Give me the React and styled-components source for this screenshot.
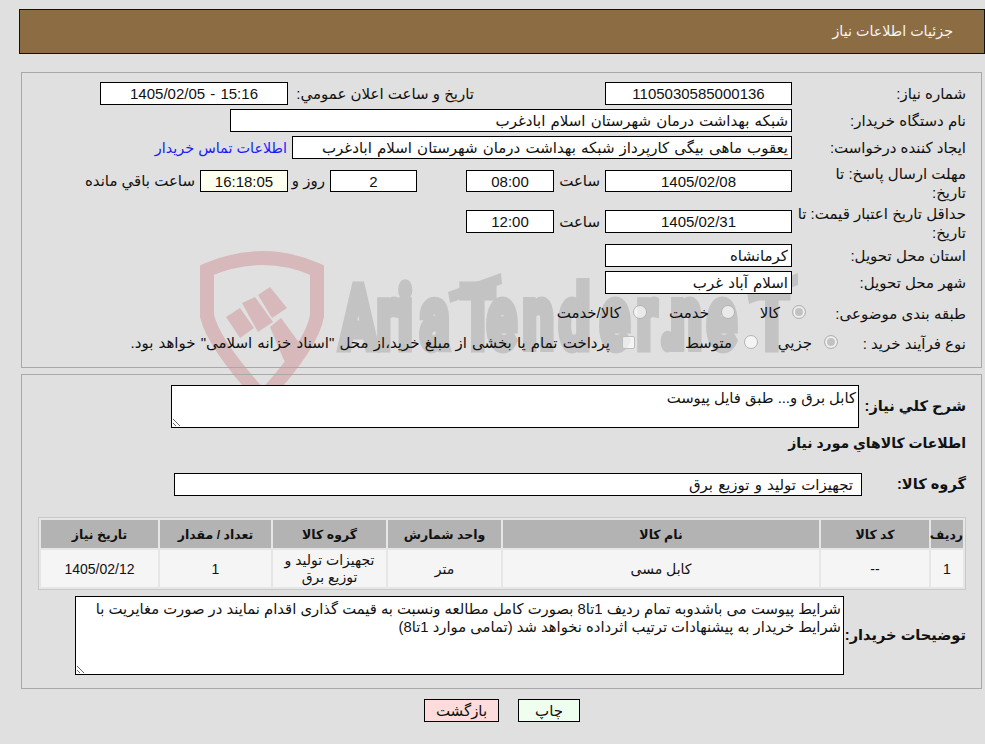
import React from "react";
import styled, { createGlobalStyle } from "styled-components";

const GlobalStyle = createGlobalStyle`
  html, body {
    margin: 0;
    background: #e0e0e0;
  }
  body {
    font-family: "Liberation Sans", "DejaVu Sans", sans-serif;
    font-size: 15px;
    color: #111;
  }
`;

const Page = styled.div`
  position: relative;
  width: 985px;
  height: 744px;
  overflow: hidden;
  box-sizing: border-box;
  padding: 9px 0 0 19px;
`;

const Watermark = styled.svg`
  position: absolute;
  left: 190px;
  top: 240px;
  z-index: 0;
`;

const Content = styled.div`
  position: relative;
  z-index: 1;
`;

const Header = styled.div`
  box-sizing: border-box;
  width: 966px;
  height: 45px;
  background: #8c6d43;
  border: 1px solid #111;
  color: #f4f4f4;
  font-size: 14.3px;
  padding: 0 31px;
  line-height: 43px;
`;

const Panel = styled.div`
  box-sizing: border-box;
  margin: ${(p) => p.$top}px 3px 0 0;
  width: 961px;
  height: ${(p) => p.$h}px;
  border: 1px solid #a8a8a8;
  padding: ${(p) => p.$pad}px 15px 0 0;
`;

const Row = styled.div`
  display: flex;
  align-items: center;
  height: ${(p) => p.$h || 23}px;
  margin-bottom: ${(p) => (p.$mb === undefined ? 4 : p.$mb)}px;
`;

const Label = styled.div`
  flex: none;
  box-sizing: border-box;
  width: ${(p) => p.$w || 174}px;
  padding-top: ${(p) => p.$pt || 0}px;
  line-height: 19px;
  white-space: nowrap;
  font-weight: ${(p) => (p.$bold ? "bold" : "normal")};
  font-size: ${(p) => (p.$bold ? 14.6 : 15)}px;
`;

const Side = styled.div`
  flex: none;
  box-sizing: border-box;
  width: ${(p) => p.$w}px;
  padding-right: ${(p) => p.$pr || 0}px;
  white-space: nowrap;
`;

const Field = styled.input`
  flex: none;
  box-sizing: border-box;
  width: ${(p) => p.$w}px;
  height: ${(p) => p.$h || 23}px;
  border: 1px solid #000;
  border-radius: 0;
  margin: 0;
  padding: 0 ${(p) => p.$px || 3}px;
  outline: none;
  background: ${(p) => p.$bg || "#fff"};
  color: #111;
  font: inherit;
  word-spacing: 1px;
  text-align: ${(p) => (p.$center ? "center" : "right")};
`;

const Notes = styled.textarea`
  flex: none;
  display: block;
  box-sizing: border-box;
  width: ${(p) => p.$w}px;
  height: ${(p) => p.$h}px;
  border: 1px solid #000;
  border-radius: 0;
  margin: 0;
  padding: 3px 2px 2px;
  outline: none;
  background: #fff;
  color: #111;
  font: inherit;
  font-size: 14.8px;
  line-height: 18px;
  overflow: hidden;
  resize: both;
`;

const LinkText = styled.a`
  color: #1a1aff;
  font-size: 14.4px;
  padding-right: 5px;
  text-decoration: none;
  white-space: nowrap;
`;

const Option = styled.label`
  flex: none;
  display: flex;
  align-items: center;
  box-sizing: border-box;
  width: ${(p) => p.$w}px;
  word-spacing: ${(p) => p.$ws || 0}px;
  white-space: nowrap;
`;

const Radio = styled.input.attrs({ type: "radio", disabled: true })`
  flex: none;
  appearance: none;
  box-sizing: border-box;
  width: 14px;
  height: 14px;
  margin: -2px 0 0 12px;
  border-radius: 50%;
  border: 1px solid #b4b4b4;
  background: rgba(255, 255, 255, 0.65);
  &:checked {
    background: #c2c2c2;
    box-shadow: inset 0 0 0 2px #efefef;
  }
`;

const Check = styled.input.attrs({ type: "checkbox", disabled: true })`
  flex: none;
  appearance: none;
  box-sizing: border-box;
  width: 13px;
  height: 13px;
  margin: -2px 0 0 12px;
  border-radius: 2px;
  border: 1px solid #bcbcbc;
  background: rgba(255, 255, 255, 0.65);
`;

const Heading = styled.div`
  font-size: 14px;
  font-weight: bold;
  line-height: 20px;
  margin: 5px 0 20px;
`;

const Table = styled.table`
  box-sizing: border-box;
  width: 928px;
  margin-bottom: 6px;
  table-layout: fixed;
  border-collapse: separate;
  border-spacing: 2px;
  border: 1px solid #c9c9c9;
  background: #e6e6e6;
  font-size: 14px;
`;

const Th = styled.th`
  height: 28px;
  padding: 0;
  background: #b3b3b3;
  font-size: 12.5px;
  font-weight: bold;
  text-align: center;
`;

const Td = styled.td`
  height: 36px;
  padding: 1px 2px 0;
  background: #f5f5f5;
  line-height: 17px;
  text-align: center;
`;

const Actions = styled.div`
  display: flex;
  gap: 19px;
  padding: 10px 405px 0 0;
`;

const ActionButton = styled.button`
  box-sizing: border-box;
  width: ${(p) => p.$w}px;
  height: 23px;
  padding: 0;
  border: 1px solid #000;
  border-radius: 0;
  background: ${(p) => p.$bg};
  color: #111;
  font: inherit;
`;

const columns = [
  { title: "ردیف", w: 32, value: "1" },
  { title: "کد کالا", w: 108, value: "--" },
  { title: "نام کالا", w: 316, value: "کابل مسی" },
  { title: "واحد شمارش", w: 113, value: "متر" },
  { title: "گروه کالا", w: 113, value: "تجهیزات تولید و توزیع برق" },
  { title: "تعداد / مقدار", w: 111, value: "1" },
  { title: "تاریخ نیاز", w: 117, value: "1405/02/12" },
];

// left edge of each letter of the wordmark on the page
const logoScale = 0.62;
const logoLetterX = [340, 377, 398, 420, 461, 487, 523, 559, 600, 637, 660, 671, 707, 755]
  .map((x) => (x / logoScale).toFixed(1))
  .join(" ");

const Logo = () => (
  <Watermark width="620" height="170" viewBox="190 240 620 170">
    <path
      d="M207 270 Q263 246 317 270 V316 Q312 345 263 398 Q214 345 207 316 Z"
      fill="none"
      stroke="#d7b9bb"
      strokeWidth="14"
    />
    <polygon points="226,317 240,308 254,328 240,338" fill="#d7b9bb" />
    <polygon points="242,303 255,297 273,322 258,332" fill="#d7b9bb" />
    <polygon points="258,295 270,287 287,308 272,318" fill="#d7b9bb" />
    <polygon points="270,327 281,318 306,352 292,375 283,358" fill="#d7b9bb" />
    <text
      x={logoLetterX}
      y="348"
      transform={`scale(${logoScale} 1)`}
      direction="ltr"
      fontFamily="Roboto, sans-serif"
      fontWeight="700"
      fontSize="88"
      fill="#c3c3c3"
      stroke="#c3c3c3"
      strokeWidth="9"
    >
      AriaTender.neT
    </text>
    <polygon points="448,292 501,273 502,284 450,303" fill="#c3c3c3" />
    <polygon points="747,293 798,273 798,285 749,304" fill="#c3c3c3" />
  </Watermark>
);

export default function App() {
  return (
    <Page dir="rtl">
      <GlobalStyle />
      <Logo />
      <Content>
        <Header>جزئیات اطلاعات نیاز</Header>

        <Panel $top={18} $h={296} $pad={9}>
          <Row>
            <Label>شماره نیاز:</Label>
            <Field $w={187} $center readOnly value="1105030585000136" />
            <Side $w={317} $pr={131}>تاریخ و ساعت اعلان عمومي:</Side>
            <Field $w={188} $center readOnly value="15:16 - 1405/02/05" />
          </Row>
          <Row>
            <Label>نام دستگاه خریدار:</Label>
            <Field $w={562} readOnly value="شبکه بهداشت درمان شهرستان اسلام ابادغرب" />
          </Row>
          <Row>
            <Label>ایجاد کننده درخواست:</Label>
            <Field $w={500} readOnly value="یعقوب ماهی بیگی کارپرداز شبکه بهداشت درمان شهرستان اسلام ابادغرب" />
            <LinkText href="#">اطلاعات تماس خریدار</LinkText>
          </Row>
          <Row $h={36}>
            <Label $pt={3}>مهلت ارسال پاسخ: تا<br />تاریخ:</Label>
            <Field $w={187} $h={22} $center readOnly value="1405/02/08" />
            <Side $w={51} $pr={5}>ساعت</Side>
            <Field $w={88} $h={22} $center readOnly value="08:00" />
            <Side $w={49} />
            <Field $w={87} $h={22} $center readOnly value="2" />
            <Side $w={42} $pr={5}>روز و</Side>
            <Field $w={88} $h={22} $center $bg="#ffffee" readOnly value="16:18:05" />
            <Side $w={120} $pr={5}>ساعت باقي مانده</Side>
          </Row>
          <Row $h={37}>
            <Label $pt={3}>حداقل تاریخ اعتبار قیمت: تا<br />تاریخ:</Label>
            <Field $w={187} $center readOnly value="1405/02/31" />
            <Side $w={51} $pr={5}>ساعت</Side>
            <Field $w={88} $center readOnly value="12:00" />
          </Row>
          <Row>
            <Label>استان محل تحویل:</Label>
            <Field $w={187} readOnly value="کرمانشاه" />
          </Row>
          <Row $mb={7}>
            <Label>شهر محل تحویل:</Label>
            <Field $w={187} readOnly value="اسلام آباد غرب" />
          </Row>
          <Row $h={24} $mb={6}>
            <Label $w={160}>طبقه بندی موضوعی:</Label>
            <Option $w={71}><Radio defaultChecked name="kind" />کالا</Option>
            <Option $w={88}><Radio name="kind" />خدمت</Option>
            <Option $w={120}><Radio name="kind" />کالا/خدمت</Option>
          </Row>
          <Row $h={24}>
            <Label $w={128}>نوع فرآیند خرید :</Label>
            <Option $w={80}><Radio defaultChecked name="process" />جزيي</Option>
            <Option $w={123}><Radio name="process" />متوسط</Option>
            <Option $w={520} $ws={1}><Check />پرداخت تمام یا بخشی از مبلغ خرید،از محل "اسناد خزانه اسلامی" خواهد بود.</Option>
          </Row>
        </Panel>

        <Panel $top={6} $h={315} $pad={10}>
          <Row $h={43} $mb={0}>
            <Label $w={107} $bold>شرح کلي نیاز:</Label>
            <Notes $w={688} $h={43} readOnly value="کابل برق و... طبق فایل پیوست" />
          </Row>
          <Heading>اطلاعات کالاهاي مورد نیاز</Heading>
          <Row $mb={21}>
            <Label $w={104} $bold>گروه کالا:</Label>
            <Field $w={688} $px={8} readOnly value="تجهیزات تولید و توزیع برق" />
          </Row>
          <Table>
            <colgroup>
              {columns.map((c) => (
                <col key={c.title} style={{ width: c.w }} />
              ))}
            </colgroup>
            <thead>
              <tr>
                {columns.map((c) => (
                  <Th key={c.title}>{c.title}</Th>
                ))}
              </tr>
            </thead>
            <tbody>
              <tr>
                {columns.map((c) => (
                  <Td key={c.title}>{c.value}</Td>
                ))}
              </tr>
            </tbody>
          </Table>
          <Row $h={79} $mb={0}>
            <Label $w={122} $bold>توضیحات خریدار:</Label>
            <Notes
              $w={769}
              $h={79}
              readOnly
              value="شرایط پیوست می باشدوبه تمام ردیف 1تا8 بصورت کامل مطالعه ونسبت به قیمت گذاری اقدام نمایند در صورت مغایریت با شرایط خریدار به پیشنهادات ترتیب اثرداده نخواهد شد (تمامی موارد 1تا8)"
            />
          </Row>
        </Panel>

        <Actions>
          <ActionButton $w={62} $bg="#efffef">چاپ</ActionButton>
          <ActionButton $w={75} $bg="#ffdcdc">بازگشت</ActionButton>
        </Actions>
      </Content>
    </Page>
  );
}
